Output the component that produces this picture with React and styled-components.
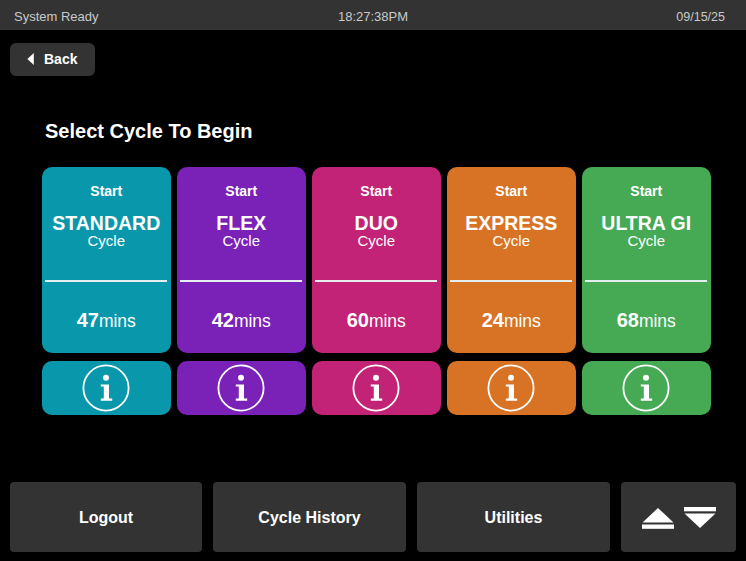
import React from 'react';
import styled, {createGlobalStyle} from 'styled-components';

const GlobalStyle = createGlobalStyle`
  html, body {
    margin: 0;
    padding: 0;
    background: #000;
  }

  body {
    font-family: "Liberation Sans", Arial, sans-serif;
  }
`;

const Page = styled.div`
  display: flex;
  flex-direction: column;
  width: 746px;
  height: 561px;
  overflow: hidden;
  background: #000;
`;

const StatusBar = styled.div`
  display: grid;
  grid-template-columns: 1fr auto 1fr;
  align-items: baseline;
  height: 30px;
  padding: 9px 14px 0;
  box-sizing: border-box;
  background: #333;
  color: #c9c9c9;
  font-size: 13px;
`;

const StatusClock = styled.span`
  text-align: center;
`;

const StatusDate = styled.span`
  margin-right: 7px;
  font-size: 12.5px;
  text-align: right;
`;

const BackButton = styled.div`
  display: flex;
  align-items: center;
  gap: 9px;
  width: 85px;
  height: 33px;
  margin: 13px 0 0 10px;
  padding: 0 0 1px 17px;
  box-sizing: border-box;
  border-radius: 6px;
  background: #333;
  color: #fff;
  font-size: 14px;
  font-weight: bold;
`;

const Title = styled.h1`
  margin: 43px 0 0 45px;
  color: #fff;
  font-size: 20px;
  font-weight: bold;
  line-height: 24px;
`;

const CycleRow = styled.div`
  display: flex;
  gap: 5.5px;
  margin: 24px 0 0 41.5px;
`;

const CycleColumn = styled.div`
  display: flex;
  flex-direction: column;
  gap: 8px;
  width: 129.5px;
`;

const CycleCard = styled.div`
  display: flex;
  flex-direction: column;
  align-items: center;
  height: 186px;
  border-radius: 10px;
  background: ${p => p.$color};
  color: #fff;
`;

const StartLabel = styled.div`
  margin-top: 16px;
  font-size: 14px;
  font-weight: bold;
  line-height: 16px;
`;

const CycleName = styled.div`
  margin-top: 14px;
  font-size: 19.5px;
  font-weight: bold;
  line-height: 20px;
`;

const CycleLabel = styled.div`
  font-size: 15px;
  line-height: 16px;
`;

const Divider = styled.div`
  width: 122px;
  height: 2px;
  margin-top: 31px;
  background: #e4eeee;
`;

const Duration = styled.div`
  margin-top: 27px;
  font-size: 17.5px;
  line-height: 22px;

  b {
    font-size: 20px;
    font-weight: bold;
  }
`;

const InfoButton = styled.div`
  display: flex;
  align-items: center;
  justify-content: center;
  height: 54px;
  border-radius: 10px;
  background: ${p => p.$color};
`;

const BottomBar = styled.div`
  display: grid;
  grid-template-columns: 192px 193px 193px 115px;
  gap: 11px;
  margin: auto 0 9px 10px;
`;

const BottomButton = styled.div`
  display: flex;
  align-items: center;
  justify-content: center;
  height: 70px;
  padding-top: 1px;
  box-sizing: border-box;
  border-radius: 4px;
  background: #333;
  color: #fff;
  font-size: 16px;
  font-weight: bold;
`;

const ScrollIcons = styled.div`
  display: flex;
  align-items: center;
  gap: 10px;
`;

const BackArrow = () => <svg width="8" height="12" viewBox="0 0 8 12">
  <path d="M6.8 0V12L0.4 6Z" fill="#fff"/>
</svg>;

const InfoIcon = () => <svg width="48" height="48" viewBox="0 0 48 48">
  <circle cx="24" cy="24" r="22.6" fill="none" stroke="#fff" strokeWidth="1.8"/>
  <circle cx="24" cy="13.7" r="3" fill="#fff"/>
  <path d="M18.8 20.4H27V34.6H30.2V36.7H18.8V34.6H21.8V22.5H18.8Z" fill="#fff"/>
</svg>;

const ScrollUp = () => <svg width="32" height="22" viewBox="0 0 32 22">
  <path d="M16 1L31.5 15.5H0.5Z" fill="#fff"/>
  <rect x="0" y="17.5" width="32" height="4.3" fill="#fff"/>
</svg>;

const ScrollDown = () => <svg width="32" height="22" viewBox="0 0 32 22">
  <rect x="0" y="0" width="32" height="4.3" fill="#fff"/>
  <path d="M0.5 6.5H31.5L16 21Z" fill="#fff"/>
</svg>;

const cycles = [
  {name: 'STANDARD', mins: 47, color: '#0998ab'},
  {name: 'FLEX', mins: 42, color: '#7a21b8'},
  {name: 'DUO', mins: 60, color: '#c22376'},
  {name: 'EXPRESS', mins: 24, color: '#d87326'},
  {name: 'ULTRA GI', mins: 68, color: '#45aa53'},
];

const App = () => <Page>
  <GlobalStyle/>
  <StatusBar>
    <span>System Ready</span>
    <StatusClock>18:27:38PM</StatusClock>
    <StatusDate>09/15/25</StatusDate>
  </StatusBar>
  <BackButton><BackArrow/>Back</BackButton>
  <Title>Select Cycle To Begin</Title>
  <CycleRow>
    {cycles.map(cycle => <CycleColumn key={cycle.name}>
      <CycleCard $color={cycle.color}>
        <StartLabel>Start</StartLabel>
        <CycleName>{cycle.name}</CycleName>
        <CycleLabel>Cycle</CycleLabel>
        <Divider/>
        <Duration><b>{cycle.mins}</b>mins</Duration>
      </CycleCard>
      <InfoButton $color={cycle.color}><InfoIcon/></InfoButton>
    </CycleColumn>)}
  </CycleRow>
  <BottomBar>
    <BottomButton>Logout</BottomButton>
    <BottomButton>Cycle History</BottomButton>
    <BottomButton>Utilities</BottomButton>
    <BottomButton>
      <ScrollIcons><ScrollUp/><ScrollDown/></ScrollIcons>
    </BottomButton>
  </BottomBar>
</Page>;

export default App;
